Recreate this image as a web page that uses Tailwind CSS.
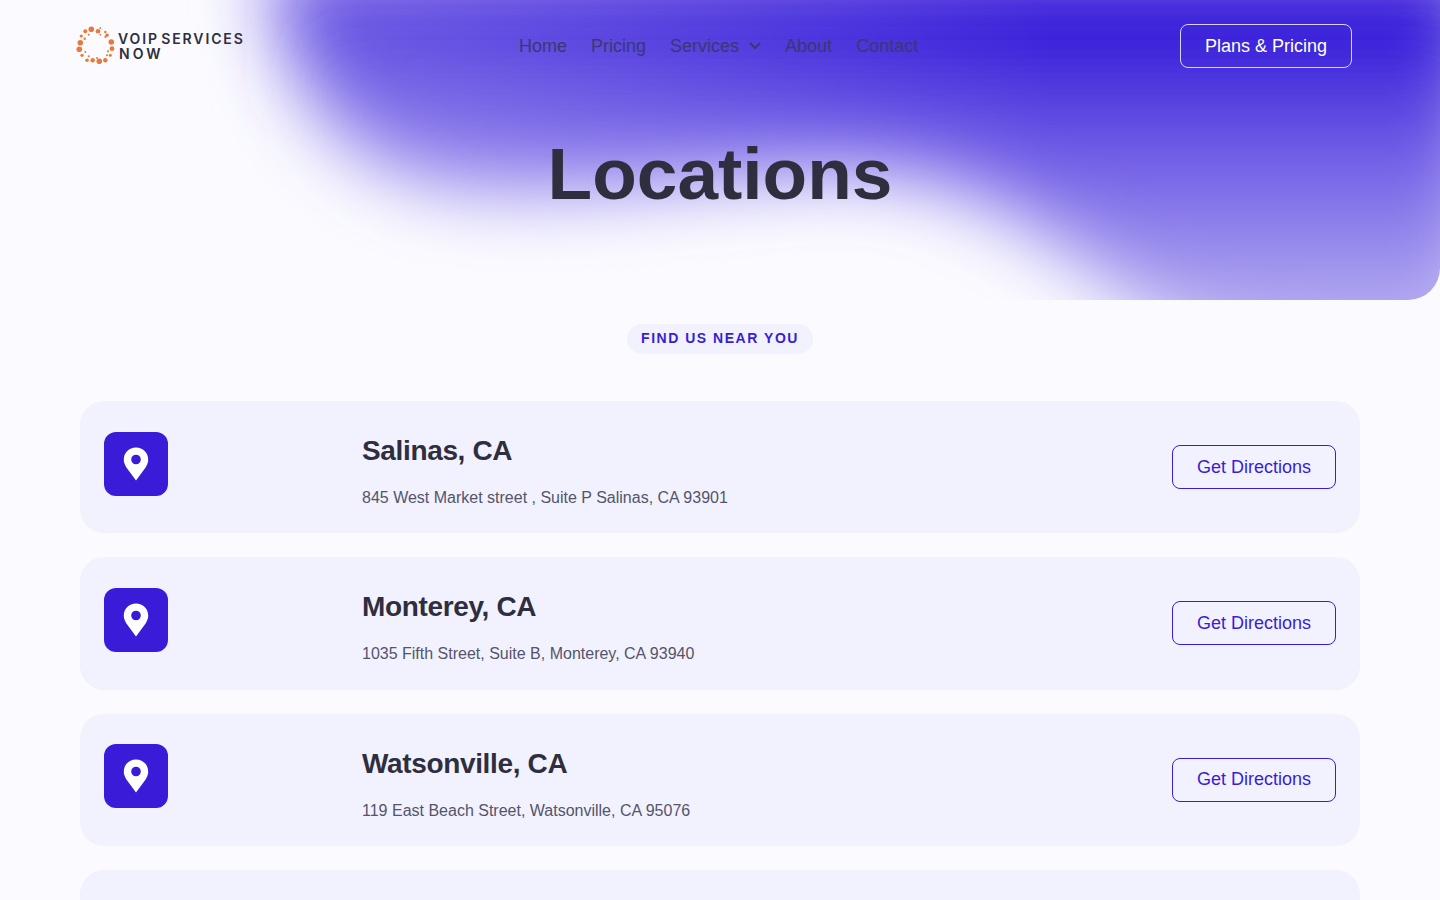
<!DOCTYPE html>
<html lang="en">
<head>
    <meta charset="UTF-8">
    <title>Locations</title>
    <script src="https://cdn.jsdelivr.net/npm/@tailwindcss/browser@4"></script>
</head>
<body class="bg-[#fbfbff] font-['Liberation_Sans',Arial,sans-serif] text-[#2f2e3e] relative overflow-x-hidden">
    <!-- Hero gradient -->
    <div class="absolute top-0 left-0 w-full h-[300px] overflow-hidden rounded-br-[32px]">
        <svg width="1440" height="300" viewBox="0 0 1440 300" class="block">
            <defs>
                <filter id="soft" filterUnits="userSpaceOnUse" x="0" y="-200" width="1700" height="800">
                    <feGaussianBlur stdDeviation="38"></feGaussianBlur>
                </filter>
                <linearGradient id="fade" gradientUnits="userSpaceOnUse" x1="0" y1="0" x2="0" y2="340">
                    <stop offset="0.1" stop-color="#3219d8"></stop>
                    <stop offset="0.44" stop-color="#6e5ae6"></stop>
                    <stop offset="0.74" stop-color="#988cec"></stop>
                    <stop offset="1" stop-color="#c0b8f2"></stop>
                </linearGradient>
                <linearGradient id="veil" gradientUnits="userSpaceOnUse" x1="200" y1="0" x2="1050" y2="0">
                    <stop offset="0" stop-color="#fbfbff" stop-opacity="0.3"></stop>
                    <stop offset="1" stop-color="#fbfbff" stop-opacity="0"></stop>
                </linearGradient>
            </defs>
            <path filter="url(#soft)" fill="url(#fade)" d="M270 -40 C275 60 320 160 440 185 C560 205 720 170 850 170 C950 170 1030 215 1130 300 C1200 350 1300 400 1480 420 L1480 -40 Z"></path>
            <rect width="1440" height="300" fill="url(#veil)"></rect>
        </svg>
    </div>

    <div class="relative">
        <!-- Nav -->
        <header class="h-[92px] flex items-center pl-[76px] pr-[88px]">
            <a href="#" class="w-[443px] flex items-center gap-[3px] mt-[-1px]">
                <svg width="39" height="39" viewBox="0 0 39 39" fill="#e57a3c">
                    <circle cx="15.300" cy="3.300" r="2.800"></circle><circle cx="22" cy="5.300" r="2.300"></circle><circle cx="9.300" cy="5.300" r="2"></circle><circle cx="5.300" cy="10" r="1.600"></circle><circle cx="4.300" cy="16.700" r="2.800"></circle><circle cx="3.300" cy="23.300" r="2.800"></circle><circle cx="6" cy="29.300" r="1.600"></circle><circle cx="11" cy="34.300" r="1.800"></circle><circle cx="16.700" cy="34.300" r="2.200"></circle><circle cx="23.300" cy="35.300" r="2.800"></circle><circle cx="29.300" cy="34.300" r="2.200"></circle><circle cx="34.300" cy="29.300" r="1.500"></circle><circle cx="36" cy="22.700" r="2.400"></circle><circle cx="35.300" cy="16" r="2.800"></circle><circle cx="31" cy="9.300" r="1.800"></circle><circle cx="29.300" cy="6" r="1.200"></circle><circle cx="24.300" cy="2" r="0.900"></circle><circle cx="12.700" cy="8.700" r="1"></circle><circle cx="8.700" cy="12.700" r="1.200"></circle><circle cx="9.300" cy="26" r="1"></circle><circle cx="12.700" cy="30.300" r="1"></circle><circle cx="21" cy="32" r="1"></circle><circle cx="31" cy="29.300" r="1"></circle><circle cx="32" cy="25.300" r="1.100"></circle><circle cx="29.300" cy="11" r="1"></circle><circle cx="24.300" cy="8.700" r="0.900"></circle>
                </svg>
                <span class="font-['Inter',sans-serif] font-semibold text-[14px] leading-[15px] tracking-[1.880px] [word-spacing:-3px] text-[#2f2e3e] whitespace-nowrap">VOIP SERVICES<br><span class="tracking-[3px] pl-px">NOW</span></span>
            </a>
            <nav class="flex items-center gap-6 text-[18px] text-[#3b3773]">
                <a href="#">Home</a>
                <a href="#">Pricing</a>
                <a href="#" class="flex items-center gap-[10px]">Services
                    <svg width="12" height="8" viewBox="0 0 12 8" fill="none" stroke="currentColor" stroke-width="2" stroke-linecap="round" stroke-linejoin="round"><path d="M1.500 1.500 6 6l4.500-4.500"></path></svg>
                </a>
                <a href="#">About</a>
                <a href="#">Contact</a>
            </nav>
            <a href="#" class="ml-auto w-[172px] h-11 flex items-center justify-center rounded-lg border border-[#d8d3f8] text-white text-[18px]">Plans &amp; Pricing</a>
        </header>

        <!-- Title -->
        <h1 class="h-[232px] pt-[36px] text-center text-[73px] leading-[92px] font-bold text-[#2f2e3e]">Locations</h1>

        <div class="flex justify-center">
            <span class="h-[30px] px-[14px] pb-px flex items-center rounded-full bg-[#f1f2fe] text-[14px] font-bold tracking-[1.520px] text-[#3a1fd0]">FIND US NEAR YOU</span>
        </div>

        <!-- Location cards -->
        <main class="mt-[47px] mx-20 flex flex-col gap-6">
            <article class="h-[132.33px] rounded-3xl bg-[#f1f2fe] px-6 flex items-center">
                <div class="w-16 h-16 mt-[-7px] rounded-xl bg-[#3a1cd8] flex items-center justify-center">
                    <svg width="26" height="34" viewBox="0 0 26 34"><path fill="#fff" fill-rule="evenodd" d="M13 .5C6 .5.800 5.800.800 12.500c0 3 1 5.300 2.600 8L13 33.500l9.600-13c1.600-2.700 2.600-5 2.600-8C25.200 5.800 20 .5 13 .5Zm0 7.200a4.800 4.800 0 1 1 0 9.600 4.800 4.800 0 0 1 0-9.600Z"></path></svg>
                </div>
                <div class="ml-[194px] self-start pt-8">
                    <h2 class="text-[28px] leading-9 font-bold tracking-[-0.35px]">Salinas, CA</h2>
                    <p class="mt-[17px] text-[16px] leading-6 text-[#55546a]">845 West Market street , Suite P Salinas, CA 93901</p>
                </div>
                <a href="#" class="ml-auto w-[164px] h-11 flex items-center justify-center rounded-lg border border-[#3a1cd8] text-[#3a1cd8] text-[18px]">Get Directions</a>
            </article>
            <article class="h-[132.33px] rounded-3xl bg-[#f1f2fe] px-6 flex items-center">
                <div class="w-16 h-16 mt-[-7px] rounded-xl bg-[#3a1cd8] flex items-center justify-center">
                    <svg width="26" height="34" viewBox="0 0 26 34"><path fill="#fff" fill-rule="evenodd" d="M13 .5C6 .5.800 5.800.800 12.500c0 3 1 5.300 2.600 8L13 33.500l9.600-13c1.600-2.700 2.600-5 2.600-8C25.200 5.800 20 .5 13 .5Zm0 7.200a4.800 4.800 0 1 1 0 9.600 4.800 4.800 0 0 1 0-9.600Z"></path></svg>
                </div>
                <div class="ml-[194px] self-start pt-8">
                    <h2 class="text-[28px] leading-9 font-bold tracking-[-0.35px]">Monterey, CA</h2>
                    <p class="mt-[17px] text-[16px] leading-6 text-[#55546a]">1035 Fifth Street, Suite B, Monterey, CA 93940</p>
                </div>
                <a href="#" class="ml-auto w-[164px] h-11 flex items-center justify-center rounded-lg border border-[#3a1cd8] text-[#3a1cd8] text-[18px]">Get Directions</a>
            </article>
            <article class="h-[132.33px] rounded-3xl bg-[#f1f2fe] px-6 flex items-center">
                <div class="w-16 h-16 mt-[-7px] rounded-xl bg-[#3a1cd8] flex items-center justify-center">
                    <svg width="26" height="34" viewBox="0 0 26 34"><path fill="#fff" fill-rule="evenodd" d="M13 .5C6 .5.800 5.800.800 12.500c0 3 1 5.300 2.600 8L13 33.500l9.600-13c1.600-2.700 2.600-5 2.600-8C25.200 5.800 20 .5 13 .5Zm0 7.200a4.800 4.800 0 1 1 0 9.600 4.800 4.800 0 0 1 0-9.600Z"></path></svg>
                </div>
                <div class="ml-[194px] self-start pt-8">
                    <h2 class="text-[28px] leading-9 font-bold tracking-[-0.35px]">Watsonville, CA</h2>
                    <p class="mt-[17px] text-[16px] leading-6 text-[#55546a]">119 East Beach Street, Watsonville, CA 95076</p>
                </div>
                <a href="#" class="ml-auto w-[164px] h-11 flex items-center justify-center rounded-lg border border-[#3a1cd8] text-[#3a1cd8] text-[18px]">Get Directions</a>
            </article>
            <article class="h-[132.33px] rounded-3xl bg-[#f1f2fe]"></article>
        </main>
    </div>
</body>
</html>
